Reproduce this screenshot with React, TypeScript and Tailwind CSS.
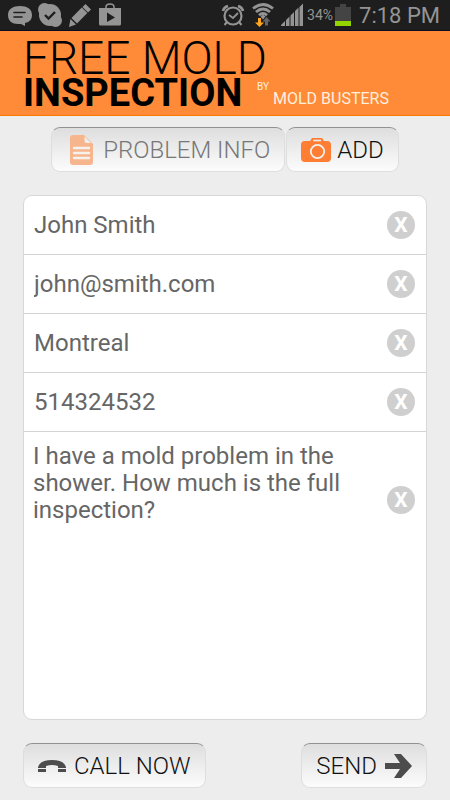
import { useState, type ReactNode } from 'react'
import clsx from 'clsx'

const FIELDS = [
  { key: 'name', label: 'Name', type: 'text' },
  { key: 'email', label: 'Email', type: 'email' },
  { key: 'city', label: 'City', type: 'text' },
  { key: 'phone', label: 'Phone', type: 'tel' },
] as const

const INITIAL = {
  name: 'John Smith',
  email: 'john@smith.com',
  city: 'Montreal',
  phone: '514324532',
  message: 'I have a mold problem in the shower. How much is the full inspection?',
}

type FieldKey = keyof typeof INITIAL

function StatusBar() {
  return (
    <div className="flex h-[31px] items-center justify-between border-b border-[#0b0b22] bg-[#1e1e1e] pr-2.5 pl-2 text-[#949494]">
      <div className="flex items-center gap-1.5">
        {/* message */}
        <svg className="h-6 w-6" viewBox="0 0 24 24">
          <path d="M12 3C5 3 0 6 0 12s4 9 10 9h3l4 2v-3c5-1 7-4 7-8 0-6-5-9-12-9Z" fill="#949494" />
          <path d="M6 9.5h11M6 14h8" stroke="#1e1e1e" strokeWidth="1.6" strokeLinecap="round" />
        </svg>
        {/* skype */}
        <svg className="h-6 w-6" viewBox="0 0 24 24">
          <circle cx="12" cy="12" r="11" fill="#949494" />
          <circle cx="6.5" cy="6.5" r="6.5" fill="#949494" />
          <circle cx="17.5" cy="17.5" r="6.5" fill="#949494" />
          <path d="m7 12 3.5 3.5L17 9" fill="none" stroke="#1e1e1e" strokeWidth="2.4" />
        </svg>
        {/* pencil */}
        <svg className="h-6 w-6" viewBox="0 0 24 24">
          <path d="m17.5 1 5.5 5.5-3 3L14.5 4ZM13.8 4.6l5.5 5.5L9 20.5 3.500 15ZM2.500 16 8 21.500 1 24Z" fill="#949494" />
        </svg>
        {/* play store */}
        <svg className="h-6 w-6" viewBox="0 0 24 24">
          <path d="M8 6V4q0-3 4-3t4 3v2" fill="none" stroke="#949494" strokeWidth="1.5" />
          <path d="M1 5h22v16q0 1.500-1.500 1.500h-19Q1 22.500 1 21Z" fill="#949494" />
          <path d="m9 9.500 8 5-8 4.500Z" fill="#1e1e1e" />
        </svg>
      </div>
      <div className="flex items-center">
        {/* alarm */}
        <svg className="h-6 w-6" viewBox="0 0 24 24" fill="none" stroke="#949494">
          <circle cx="12" cy="13" r="8.5" strokeWidth="2.2" />
          <path d="M8 12l4 3 5-5" strokeWidth="1.8" />
          <path d="M2 8q1-4 5-5M22 8q-1-4-5-5" strokeWidth="2.6" />
          <path d="m6 19-2.500 3M18 19l2.500 3" strokeWidth="2" />
        </svg>
        {/* wifi with traffic arrows */}
        <svg className="ml-1.5 h-6 w-6" viewBox="0 0 24 24" fill="none" stroke="#949494">
          <path d="M2 5.500q10-8 20 0M5 9q7-6 14 0M8 12.200q4-3.500 8 0" strokeWidth="2.8" />
          <path d="m9.500 13.500 2.500-2 2.500 2-2.500 3Z" fill="#949494" stroke="none" />
          <path d="m15.500 14 4 4.500H17v4h-3v-4h-2.500Z" fill="#666" stroke="none" />
          <path d="M7 15h3v4.500h3l-4.500 4.500L4 19.500h3Z" fill="#ffa51f" stroke="none" />
        </svg>
        {/* signal */}
        <svg className="ml-1.5 h-6 w-[22px]" viewBox="0 0 22 24" fill="#949494">
          <path d="M0 23v-1l4-4v5ZM5 17l3.500-3.500V23H5ZM9.500 12.500 13 9v14H9.500ZM14 8l3.500-3.500V23H14ZM18.500 4 22 .5V23h-3.500Z" />
        </svg>
        <span className="ml-1 text-sm">34%</span>
        {/* battery */}
        <svg className="ml-0.5 h-[22px] w-4" viewBox="0 0 16 22">
          <path d="M5 0h6v3h5v19H0V3h5Z" fill="#444" />
          <path d="M0 17h16v5H0Z" fill="#94d500" />
        </svg>
        <span className="ml-2 text-[22px] whitespace-nowrap">7:18 PM</span>
      </div>
    </div>
  )
}

function Header() {
  return (
    <header className="flex h-[85px] items-end gap-3 border-b border-[#ff7800] bg-[#ff8a38] px-[23px] pb-1">
      <h1 className="w-[222px] text-black">
        <span className="block text-[46px] leading-[34px] font-light whitespace-nowrap">FREE MOLD</span>
        <span className="block text-[38px] leading-[36px] font-bold">INSPECTION</span>
      </h1>
      <p className="flex items-start gap-1 pb-0.5 whitespace-nowrap text-[#fff0de]">
        <span className="text-[10px] leading-3">BY</span>
        <span className="pt-2 text-base leading-5">MOLD BUSTERS</span>
      </p>
    </header>
  )
}

interface ActionButtonProps {
  children: ReactNode
  disabled?: boolean
}

function ActionButton({ children, disabled }: ActionButtonProps) {
  return (
    <button
      type="button"
      disabled={disabled}
      className={clsx(
        'flex h-[45px] items-center rounded-[9px] border border-[#dedede] border-t-[#929292] bg-linear-to-b from-[#dedede] to-[#fcfcfc] px-3.5 text-2xl font-light whitespace-nowrap',
        disabled ? 'text-[#777]' : 'text-[#111]'
      )}
    >
      {children}
    </button>
  )
}

interface ClearButtonProps {
  label: string
  onClick: () => void
}

function ClearButton({ label, onClick }: ClearButtonProps) {
  return (
    <button
      type="button"
      aria-label={`Clear ${label}`}
      onClick={onClick}
      className="flex h-7 w-7 shrink-0 items-center justify-center rounded-full bg-[#cfcfcf] text-[21px] leading-7 font-bold text-white"
    >
      X
    </button>
  )
}

export default function App() {
  const [values, setValues] = useState(INITIAL)

  function update(key: FieldKey, value: string) {
    setValues(v => ({ ...v, [key]: value }))
  }

  return (
    <div className="flex min-h-screen flex-col bg-[#ededed] font-['Roboto',sans-serif]">
      <StatusBar />
      <Header />

      <main className="flex flex-1 flex-col px-[23px] pt-[11px] pb-3">
        <div className="flex justify-center gap-px">
          <ActionButton disabled>
            <svg className="ml-1 h-[30px] w-[23px]" viewBox="0 0 23 30">
              <path d="M3 0h11l9 9v18q0 3-3 3H3q-3 0-3-3V3q0-3 3-3Z" fill="#f7b58e" />
              <path d="M14.5 1.500V6q0 2 2 2H21Z" fill="#eee" />
              <path d="M4 13h15M4 18h15M4 23h15" stroke="#f5f2ee" strokeWidth="2.4" strokeLinecap="round" />
            </svg>
            <span className="ml-2.5">PROBLEM INFO</span>
          </ActionButton>
          <ActionButton>
            <svg className="h-6 w-[30px]" viewBox="0 0 30 24">
              <path d="M4 3h5l2-3h10l2 3h3q4 0 4 4v13q0 4-4 4H4q-4 0-4-4V7q0-4 4-4Z" fill="#ff7e33" />
              <path d="M12 2.500h8" stroke="#eee" strokeWidth="1.6" />
              <circle cx="16.5" cy="13.5" r="6.7" fill="none" stroke="#f4f0ec" strokeWidth="1.8" />
            </svg>
            <span className="ml-1.5">ADD</span>
          </ActionButton>
        </div>

        <form className="mt-[23px] flex flex-1 flex-col overflow-hidden rounded-[9px] border border-[#d8d8d8] bg-white text-2xl text-[#666]">
          {FIELDS.map(({ key, label, type }) => (
            <div key={key} className="flex h-[59px] items-center border-b border-[#d4d4d4] pr-[11px] pl-2.5">
              <input
                type={type}
                aria-label={label}
                value={values[key]}
                onChange={e => update(key, e.target.value)}
                className="min-w-0 flex-1 outline-none"
              />
              <ClearButton label={label} onClick={() => update(key, '')} />
            </div>
          ))}
          <div className="flex flex-1 items-start pr-[11px] pl-[9px]">
            <textarea
              aria-label="Message"
              value={values.message}
              onChange={e => update('message', e.target.value)}
              className="min-w-0 flex-1 resize-none self-stretch pt-[11px] pr-4 leading-[27px] outline-none"
            />
            <div className="pt-[54px]">
              <ClearButton label="Message" onClick={() => update('message', '')} />
            </div>
          </div>
        </form>

        <div className="mt-[23px] flex justify-between">
          <ActionButton>
            <svg className="h-3 w-7" viewBox="0 0 28 12">
              <path d="M0 7Q2 0 14 0t14 7v1h-8V6q-6-2-12 0v2H0ZM0 9h8v3H0ZM20 9h8v3h-8Z" fill="#4c4c4c" />
            </svg>
            <span className="ml-2">CALL NOW</span>
          </ActionButton>
          <ActionButton>
            <span className="mr-2">SEND</span>
            <svg className="h-6 w-[27px]" viewBox="0 0 27 24">
              <path d="M0 9h15L9 0h7l11 12-11 12H9l6-9H0Z" fill="#4c4c4c" />
            </svg>
          </ActionButton>
        </div>
      </main>
    </div>
  )
}
